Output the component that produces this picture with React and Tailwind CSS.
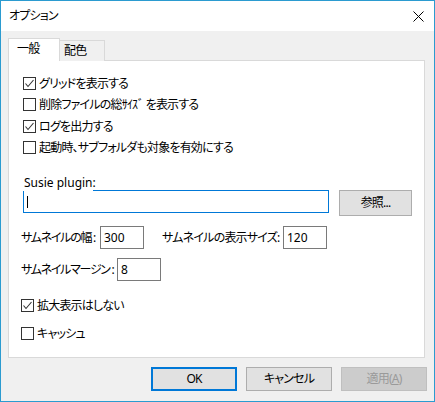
import React from "react";

const jp = "[font-family:'Noto_Sans','Noto_Sans_CJK_JP',sans-serif] [font-feature-settings:'palt'] tracking-[-0.8px]";

function Check({ checked }) {
  return (
    <span className="w-[13px] h-[13px] border border-[#333333] bg-white shrink-0 flex items-center justify-center">
      {checked && (
        <svg width="11" height="11" viewBox="0 0 11 11">
          <polyline points="1.5,5.5 4,8.5 9.5,2" fill="none" stroke="#333333" strokeWidth="1.1" />
        </svg>
      )}
    </span>
  );
}

function CheckRow({ checked, label, className }) {
  return (
    <div className={`h-[13px] flex items-center ${className}`}>
      <Check checked={checked} />
      <span className="ml-[3px] whitespace-nowrap leading-[16px]">{label}</span>
    </div>
  );
}

function NumBox({ value }) {
  return (
    <div className="w-[44px] h-[23px] shrink-0 border border-[#7a7a7a] bg-white flex items-center pl-[3px] tracking-normal">
      {value}
    </div>
  );
}

function Button({ children, primary, disabled }) {
  let cls = "border border-[#adadad] bg-[#e1e1e1] text-black";
  if (primary) cls = "border-2 border-[#0078d7] bg-[#e1e1e1] text-black";
  if (disabled) cls = "border border-[#bfbfbf] bg-[#cccccc] text-[#9a9a9a]";
  return (
    <div className={`w-[86px] h-[24px] flex items-center justify-center ${cls}`}>{children}</div>
  );
}

export default function App() {
  return (
    <div className={`w-[435px] h-[402px] border border-[#2b9bd0] bg-[#f0f0f0] flex flex-col text-[12px] text-black ${jp}`}>
      {/* title bar */}
      <div className="h-[30px] bg-white flex items-center justify-between pl-[8px] pr-[10px]">
        <span>オプション</span>
        <svg width="11" height="11" viewBox="0 0 11 11">
          <path d="M0.5 0.5 L10.5 10.5 M10.5 0.5 L0.5 10.5" stroke="#000" strokeWidth="1" />
        </svg>
      </div>

      <div className="px-[7px] pt-[8px] flex flex-col">
        {/* tabs */}
        <div className="flex items-end h-[22px] -mb-px relative z-10">
          <div className="w-[52px] h-[23px] border border-b-0 border-[#d9d9d9] bg-white flex items-center pl-[8px] pb-[2px]">
            一般
          </div>
          <div className="w-[45px] h-[21px] border border-l-0 border-b-0 border-[#d9d9d9] bg-[#f0f0f0] flex items-center pl-[4px]">
            配色
          </div>
        </div>

        {/* panel */}
        <div className="w-[417px] h-[298px] border border-[#d9d9d9] bg-white flex flex-col">
          <CheckRow checked label="グリッドを表示する" className="mt-[16px] ml-[14px]" />
          <CheckRow label="削除ファイルの総ｻｲｽﾞ を表示する" className="mt-[8px] ml-[14px]" />
          <CheckRow checked label="ログを出力する" className="mt-[9px] ml-[14px]" />
          <CheckRow label="起動時、サブフォルダも対象を有効にする" className="mt-[8px] ml-[14px]" />

          <div className="ml-[14px] mt-[22px] w-[70px] h-[15px] -mb-px bg-white relative z-10 leading-[13px] pl-[1px] whitespace-nowrap tracking-normal">
            Susie plugin:
          </div>
          <div className="ml-[14px] flex items-start">
            <div className="w-[306px] h-[23px] border border-[#0078d7] bg-white flex items-center pl-[3px]">
              <span className="w-px h-[12px] bg-black" />
            </div>
            <div className="ml-[10px] w-[73px] h-[26px] border border-[#adadad] bg-[#e1e1e1] flex items-center justify-center">
              参照...
            </div>
          </div>

          <div className="ml-[12px] mt-[10px] flex items-center">
            <span className="w-[79px] shrink-0 whitespace-nowrap tracking-[-1.3px]">サムネイルの幅 :</span>
            <NumBox value="300" />
            <span className="ml-[18px] w-[121px] shrink-0 whitespace-nowrap">サムネイルの表示サイズ:</span>
            <NumBox value="120" />
          </div>
          <div className="ml-[12px] mt-[9px] flex items-center">
            <span className="w-[96px] shrink-0 whitespace-nowrap tracking-[-1.3px]">サムネイルマージン :</span>
            <NumBox value="8" />
          </div>

          <CheckRow checked label="拡大表示はしない" className="mt-[18px] ml-[12px]" />
          <CheckRow label="キャッシュ" className="mt-[15px] ml-[12px]" />
        </div>

        {/* buttons */}
        <div className="mt-[9px] flex justify-end gap-[9px]">
          <Button primary>OK</Button>
          <Button>キャンセル</Button>
          <Button disabled>
            適用(<span className="underline">A</span>)
          </Button>
        </div>
      </div>
    </div>
  );
}
